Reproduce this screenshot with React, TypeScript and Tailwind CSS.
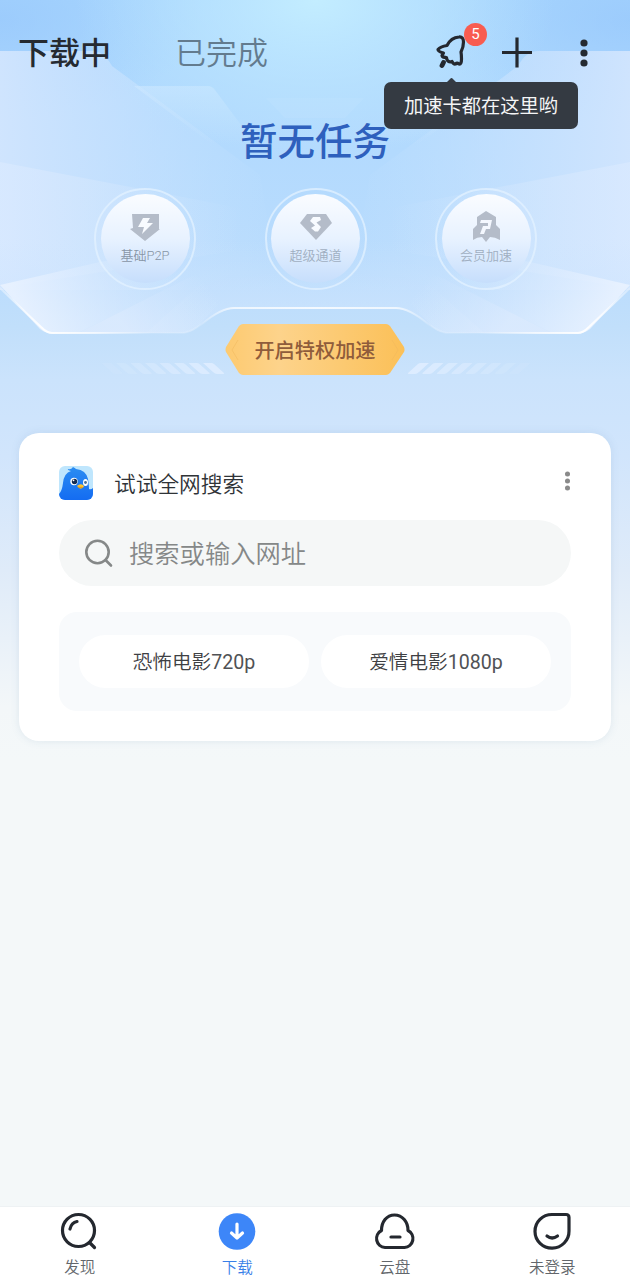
import type { ReactNode } from "react";

const line = {
  fill: "none",
  stroke: "#24282f",
  strokeWidth: 3.2,
  strokeLinecap: "round" as const,
  strokeLinejoin: "round" as const,
};

function Backdrop() {
  return (
    <svg className="absolute left-0 top-0" width="630" height="760" viewBox="0 0 630 760" aria-hidden="true">
      <defs>
        <linearGradient id="sky" x1="0" y1="0" x2="0" y2="1">
          <stop offset="0" stopColor="#a9d7fe" />
          <stop offset=".2" stopColor="#b3dafe" />
          <stop offset=".36" stopColor="#badcfd" />
          <stop offset=".43" stopColor="#c1dffb" />
          <stop offset=".5" stopColor="#cbe3fc" />
          <stop offset=".6" stopColor="#d1e5fc" />
          <stop offset=".75" stopColor="#dfebf9" />
          <stop offset=".93" stopColor="#f3f7f9" />
          <stop offset="1" stopColor="#f4f8f9" />
        </linearGradient>
        <radialGradient id="glow" gradientUnits="userSpaceOnUse" cx="0" cy="0" r="1" gradientTransform="translate(315 0) scale(240 160)">
          <stop offset="0" stopColor="#c3edff" />
          <stop offset="1" stopColor="#bfe6ff" stopOpacity="0" />
        </radialGradient>
        <radialGradient id="corner" gradientUnits="userSpaceOnUse" cx="0" cy="0" r="1" gradientTransform="translate(0 20) scale(200 100)">
          <stop offset="0" stopColor="#98c8fc" stopOpacity=".75" />
          <stop offset="1" stopColor="#98c8fc" stopOpacity="0" />
        </radialGradient>
        <linearGradient id="wing" x1="0" y1="0" x2="1" y2="0">
          <stop offset="0" stopColor="#d1e5fe" stopOpacity=".95" />
          <stop offset=".4" stopColor="#c9e2fe" stopOpacity=".7" />
          <stop offset="1" stopColor="#c4e2ff" stopOpacity="0" />
        </linearGradient>
        <linearGradient id="facet" x1="0" y1="0" x2="1" y2="0">
          <stop offset="0" stopColor="#dcebff" stopOpacity=".6" />
          <stop offset="1" stopColor="#dcebff" stopOpacity="0" />
        </linearGradient>
        <linearGradient id="fold" gradientUnits="userSpaceOnUse" x1="30" y1="325" x2="170" y2="255">
          <stop offset="0" stopColor="#e9f2ff" stopOpacity=".9" />
          <stop offset="1" stopColor="#d5e8ff" stopOpacity="0" />
        </linearGradient>
        <linearGradient id="shard" gradientUnits="userSpaceOnUse" x1="130" y1="333" x2="200" y2="275">
          <stop offset="0" stopColor="#dfecfe" stopOpacity=".9" />
          <stop offset="1" stopColor="#d5e8ff" stopOpacity="0" />
        </linearGradient>
        <linearGradient id="panel" x1="0" y1="0" x2="0" y2="1">
          <stop offset="0" stopColor="#cfe8ff" stopOpacity=".6" />
          <stop offset="1" stopColor="#cfe8ff" stopOpacity="0" />
        </linearGradient>
        <linearGradient id="rim" gradientUnits="userSpaceOnUse" x1="0" y1="0" x2="630" y2="0">
          <stop offset="0" stopColor="#fff" stopOpacity=".3" />
          <stop offset=".07" stopColor="#fff" stopOpacity=".95" />
          <stop offset=".15" stopColor="#fff" stopOpacity=".7" />
          <stop offset=".24" stopColor="#fff" stopOpacity=".1" />
          <stop offset=".32" stopColor="#fff" stopOpacity=".15" />
          <stop offset=".37" stopColor="#fff" stopOpacity=".7" />
          <stop offset=".5" stopColor="#fff" stopOpacity=".8" />
          <stop offset=".63" stopColor="#fff" stopOpacity=".7" />
          <stop offset=".68" stopColor="#fff" stopOpacity=".15" />
          <stop offset=".76" stopColor="#fff" stopOpacity=".1" />
          <stop offset=".85" stopColor="#fff" stopOpacity=".7" />
          <stop offset=".93" stopColor="#fff" stopOpacity=".95" />
          <stop offset="1" stopColor="#fff" stopOpacity=".3" />
        </linearGradient>
        <linearGradient id="base" x1="0" y1="0" x2="0" y2="1">
          <stop offset="0" stopColor="#cde4fe" stopOpacity="0" />
          <stop offset="1" stopColor="#cde4fe" stopOpacity=".8" />
        </linearGradient>
        <g id="side">
          <rect width="210" height="130" fill="url(#corner)" />
          <path d="M0 51H92Q104 51 112 66L260 175L280 290H0Z" fill="url(#wing)" />
          <path d="M134 86H208Q212 86 215 90L256 145H213Z" fill="url(#panel)" />
          <path d="M266 98L285 118H315V98Z" fill="#d2edff" opacity=".14" />
          <path d="M0 162L240 208V250L0 288Z" fill="url(#facet)" />
        </g>
        <g id="folds">
          <path d="M0 285L100 262L200 245L192 276L78 333H50Q45 333 40 329Z" fill="url(#fold)" />
          <path d="M78 333L192 276L240 280L202 322Q195 333 184 333Z" fill="url(#shard)" opacity=".8" />
          <path d="M146 333L205 280L240 285L202 322Q195 333 184 333Z" fill="url(#shard)" opacity=".4" />
        </g>
      </defs>
      <rect width="630" height="760" fill="url(#sky)" />
      <use href="#side" />
      <use href="#side" transform="translate(630 0) scale(-1 1)" />
      <rect width="630" height="200" fill="url(#glow)" />
      <path d="M0 240V288L40 329Q45 333 50 333H184Q192 331 202 324Q221 309 234 309H396Q409 309 428 324Q438 331 446 333H578Q585 333 590 329L630 288V240Z" fill="url(#base)" />
      <use href="#folds" />
      <use href="#folds" transform="translate(630 0) scale(-1 1)" />
      <path
        d="M0 288L41 327Q47 333 52 333H184Q192 331 202 324Q221 308 234 308H396Q409 308 428 324Q438 331 446 333H578Q583 333 589 327L630 288"
        fill="none"
        stroke="url(#rim)"
        strokeWidth="2"
      />
      {Array.from({ length: 8 }, (_, i) => (
        <g key={i} fill="#dfedff" opacity={0.9 - i * 0.11}>
          <path d={`M${203 - i * 14.5} 363h8q2 0 3 1l10 9q1 1-1 1h-6q-2 0-4-2z`} />
          <path d={`M${429 + i * 14.5} 363h-8q-2 0-3 1l-10 9q-1 1 1 1h6q2 0 4-2z`} />
        </g>
      ))}
    </svg>
  );
}

function RocketIcon() {
  return (
    <svg width="34" height="38" viewBox="0 0 34 38" {...line}>
      <path d="M25 4Q29.500 3.500 29.500 9Q29.500 14 27 19Q27.500 22 27.500 26Q27.500 31.500 25 31Q23 29.500 21.500 31Q19.500 31.500 18 28.500Q15 29.500 13.500 27.500Q12.500 26 12.500 24.500Q8.500 24.500 8 22.500L9.500 20Q4 18.500 4 16.500Q6.500 13.500 13 12.500Q17 4.500 25 4Z" />
      <path d="M9.500 29.500L8 32.500" strokeWidth="4.800" />
    </svg>
  );
}

function Dots({ className }: { className: string }) {
  return (
    <svg className={className} viewBox="0 0 10 28" fill="currentColor">
      <circle cx="5" cy="4" r="3.6" />
      <circle cx="5" cy="14" r="3.6" />
      <circle cx="5" cy="24" r="3.6" />
    </svg>
  );
}

function Header() {
  return (
    <header className="flex h-[104px] items-center pl-[18px] pr-[41px]">
      <h1 className="pt-[2px] text-[31px] font-medium leading-none text-[#252a31]">下载中</h1>
      <span className="ml-[64px] pt-[2px] text-[31px] font-[350] leading-none text-[#637b8e]">已完成</span>
      <div className="relative ml-auto h-[38px] w-[34px]">
        <RocketIcon />
        <span className="absolute -top-[10px] left-[30px] flex size-[23px] items-center justify-center rounded-full bg-[#f85c50] text-[15px] leading-none text-white">
          5
        </span>
        <div className="absolute left-[-50px] top-[49px] z-10 flex h-[47px] w-[194px] items-center justify-center rounded-[7px] bg-[#343a42]">
          <span className="absolute -top-[3px] left-[64px] size-[7px] rotate-45 rounded-[1px] bg-[#343a42]" />
          <span className="whitespace-nowrap pt-[3px] text-[19.3px] leading-none text-[#f4f5f6]">加速卡都在这里哟</span>
        </div>
      </div>
      <svg className="ml-[33px]" width="32" height="32" viewBox="0 0 32 32" stroke="#24282f" strokeWidth="3.2">
        <path d="M1 16.500H31M16 1.500V31.500" />
      </svg>
      <Dots className="ml-[46px] mt-[1px] h-[28px] w-[10px] text-[#252a31]" />
    </header>
  );
}

function Perk({ label, children, strong }: { label: string; children: ReactNode; strong?: boolean }) {
  return (
    <div className="flex size-[102px] items-center justify-center rounded-full border-2 border-[#e3f2ff]/75">
      <div className="flex size-[89px] flex-col items-center rounded-full bg-linear-to-b from-[#fafcff] via-[#e8f2ff] to-[#c6defc] pt-[15px]">
        <svg width="34" height="34" viewBox="0 0 34 34" fill="#b4bcc9">
          {children}
        </svg>
        <span className={strong ? "mt-[6px] whitespace-nowrap text-[13px] font-[350] leading-none text-[#8795a6]" : "mt-[6px] whitespace-nowrap text-[13px] font-[350] leading-none text-[#a0afc1]"}>
          {label}
        </span>
      </div>
    </div>
  );
}

function Perks() {
  return (
    <div className="flex w-full justify-between pl-[94px] pr-[93px]">
      <Perk label="基础P2P" strong>
        <path d="M4 5H31V20H32L17 32L2 20L5 19Z" />
        <path d="M15 9H22L19 14H25L14 25L16 18H10Z" fill="#f8fbff" />
      </Perk>
      <Perk label="超级通道">
        <path d="M8 5H27L33 14L17 31L1 14Z" />
        <path d="M21 8H14L11 12L16 16.500L12 19L16 22.500H19L22 18L17.500 13.500L22 11Z" fill="#f8fbff" />
      </Perk>
      <Perk label="会员加速">
        <path d="M17 2L27 8V16L31 20V31Q26 28 21 28L17 33L13 28Q8 28 4 31V20L8 16V8Z" />
        <path d="M12 11H23L21 20H17L15 25H11L14 17H19V14H11Z" fill="#f4f8ff" />
      </Perk>
    </div>
  );
}

function BoostButton() {
  return (
    <button className="relative flex h-[52px] w-[180px] items-center justify-center">
      <svg className="absolute inset-0" width="180" height="52" viewBox="0 0 180 52">
        <defs>
          <linearGradient id="gold" x1="0" y1="0" x2="1" y2="0">
            <stop offset="0" stopColor="#fdca70" />
            <stop offset=".3" stopColor="#fdd38b" />
            <stop offset="1" stopColor="#fbc058" />
          </linearGradient>
        </defs>
        <path d="M18 0H161Q163 0 165 2L179 23Q180 26 179 28L165 49Q163 51 161 51H18Q16 51 14 49L1 28Q0 26 1 23L14 2Q16 0 18 0Z" fill="url(#gold)" />
        <path d="M13 16L7 26L13 36M167 16L173 26L167 36" fill="none" stroke="#efb75b" strokeOpacity=".5" />
      </svg>
      <span className="relative whitespace-nowrap pt-[4px] text-[20.2px] font-medium leading-none text-[#8f5c3b]">开启特权加速</span>
    </button>
  );
}

function BirdLogo() {
  return (
    <svg width="34" height="34" viewBox="0 0 34 34">
      <defs>
        <clipPath id="tile">
          <rect width="34" height="34" rx="6" />
        </clipPath>
        <linearGradient id="bird" x1="0" y1="0" x2="0" y2="1">
          <stop offset="0" stopColor="#2b8df2" />
          <stop offset="1" stopColor="#146cf2" />
        </linearGradient>
      </defs>
      <g clipPath="url(#tile)">
        <rect width="34" height="34" fill="#bfe6fd" />
        <path d="M0 34V28Q3 25 4 17Q5 7 12 5Q8 4 9 3Q12 4 14 1Q16 2 17 3Q27 4 29 13Q30 20 30 23Q32 24 34 22V34Z" fill="url(#bird)" />
        <circle cx="15" cy="15.500" r="3.700" fill="#fff" />
        <circle cx="15.500" cy="15.500" r="2.700" fill="#132d55" />
        <circle cx="14.500" cy="14.300" r=".9" fill="#fff" />
        <ellipse cx="26.500" cy="16.500" rx="2.500" ry="3.600" fill="#fff" />
        <circle cx="26.500" cy="16.500" r="1.400" fill="#4b7194" />
        <path d="M18 20Q21 17 24 19L25 20.500Q23 23 21 22.500Z" fill="#ffc72e" />
        <path d="M18 20.500L24.500 21Q22 24 18 20.500Z" fill="#e99b1e" />
      </g>
    </svg>
  );
}

const suggestions = [
  { topic: "恐怖电影", quality: "720p" },
  { topic: "爱情电影", quality: "1080p" },
];

function SearchCard() {
  return (
    <section className="relative mx-[19px] h-[308px] rounded-[20px] bg-white px-10 pt-[33px] shadow-[0_0_8px_rgba(80,120,160,0.13)]">
      <div className="flex h-[34px] items-center">
        <BirdLogo />
        <h2 className="ml-[21px] pt-[3px] text-[21.7px] font-[350] leading-none text-[#2f3337]">试试全网搜索</h2>
        <Dots className="-mt-[5px] ml-auto mr-0 h-[20px] w-[7px] text-[#8a8a8a]" />
      </div>
      <div className="mt-5 flex h-[66px] items-center rounded-full bg-[#f5f7f7] pl-[25px]">
        <svg width="29" height="29" viewBox="0 0 29 29" fill="none" stroke="#858888" strokeWidth="2.600">
          <circle cx="13.500" cy="13" r="11.200" />
          <path d="M21.500 21L27 26.500" strokeLinecap="round" />
        </svg>
        <span className="ml-[16px] pt-[4px] text-[25.3px] font-[350] leading-none text-[#858888]">搜索或输入网址</span>
      </div>
      <div className="mt-[26px] flex h-[99px] items-center gap-3 rounded-[18px] bg-[#f8fafc] px-5">
        {suggestions.map(({ topic, quality }) => (
          <div key={topic} className="flex h-[53px] flex-1 items-center justify-center rounded-full bg-white pt-[3px] text-[19.6px] font-[350] leading-none text-[#3e4043]">
            {topic}
            <span className="font-normal text-[#505255]">{quality}</span>
          </div>
        ))}
      </div>
    </section>
  );
}

function NavItem({ label, active, children }: { label: string; active?: boolean; children: ReactNode }) {
  return (
    <div className="flex flex-1 flex-col items-center pl-[2px] pt-[4px]">
      <svg className="overflow-visible" width="40" height="40" viewBox="0 0 40 40" {...line}>
        {children}
      </svg>
      <span className={active ? "mt-[10px] text-[15.500px] font-[350] leading-none text-[#397fe8]" : "mt-[10px] text-[15.500px] font-[350] leading-none text-[#62666b]"}>{label}</span>
    </div>
  );
}

function BottomNav() {
  return (
    <nav className="mt-auto flex h-[74px] border-t border-[#eef2f4] bg-white">
      <NavItem label="发现">
        <circle cx="18.500" cy="19.500" r="16" />
        <path d="M30 32L34.500 36.500M10 18Q11.500 11.500 17 10.500" />
      </NavItem>
      <NavItem label="下载" active>
        <circle cx="20" cy="20.500" r="18.300" fill="#3d86f8" stroke="none" />
        <path d="M20 13V26M14.500 22L20 27L25.500 22" stroke="#fff" />
      </NavItem>
      <NavItem label="云盘">
        <path d="M10 36.500A9 9 0 0 1 6.500 19.500C6.500 11 11.500 4 19.500 4S33 11 33 19.500A9 9 0 0 1 29.500 36.500Z" />
        <path d="M16 26H25" />
      </NavItem>
      <NavItem label="未登录">
        <path d="M20 3.500H34Q37 3.500 37 6.500V20A17 16.800 0 1 1 20 3.500Z" />
        <path d="M15 25Q20 29 25.500 25" />
      </NavItem>
    </nav>
  );
}

export default function App() {
  return (
    <div className="relative flex h-[1280px] w-[630px] flex-col overflow-hidden bg-[#f4f8f9] font-['Roboto','Noto_Sans_CJK_SC',sans-serif]">
      <Backdrop />
      <div className="relative flex flex-1 flex-col">
        <Header />
        <div className="flex h-[329px] flex-col items-center">
          <h2 className="mt-[18px] text-[37.500px] font-medium leading-none text-[#2e60bd]">
            <span className="relative top-[2px]">暂无任务</span>
          </h2>
          <div className="mt-[28px] w-full">
            <Perks />
          </div>
          <div className="mt-[34px]">
            <BoostButton />
          </div>
        </div>
        <SearchCard />
        <BottomNav />
      </div>
    </div>
  );
}
